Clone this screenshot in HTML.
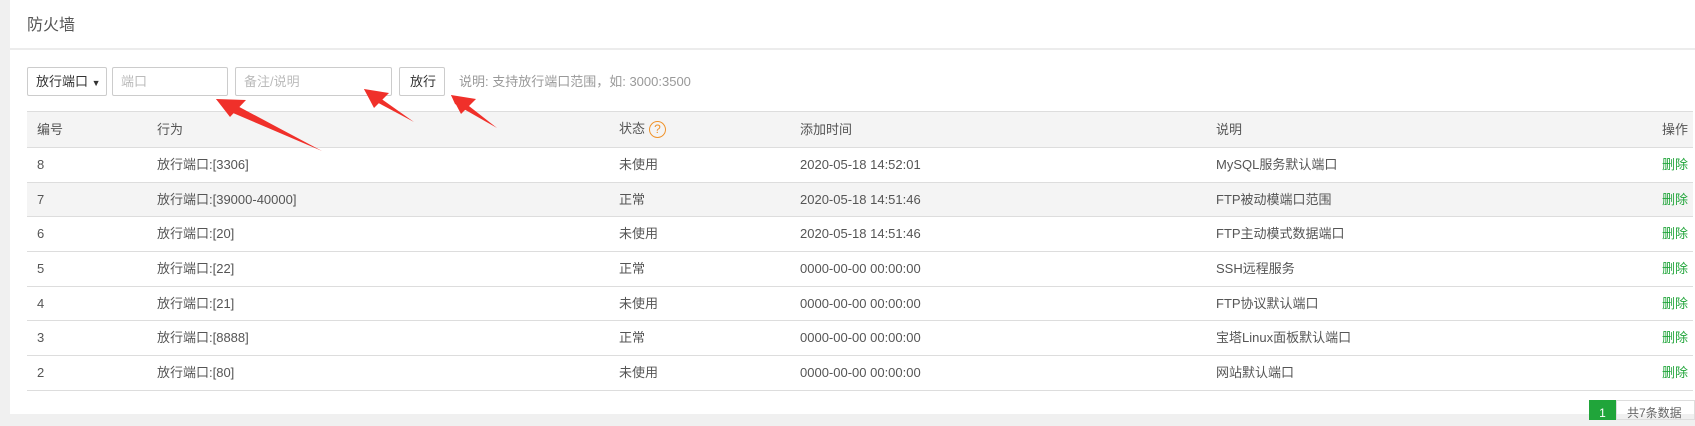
<!DOCTYPE html>
<html><head><meta charset="utf-8"><style>
*{box-sizing:border-box;margin:0;padding:0}
body{width:1695px;height:414px;overflow:hidden;background:#f0f0f0;font-family:"Liberation Sans","Noto Sans CJK SC",sans-serif;font-size:13px;color:#555;position:relative}
.main{position:absolute;left:10px;top:0;width:1685px;height:414px;background:#fff}
.title{position:absolute;left:17px;top:11px;font-size:16px;color:#555}
.hl{position:absolute;left:0;top:48px;width:1685px;height:2px;background:#ececec}
.ctl{position:absolute;top:67px;height:29px;border:1px solid #ccc;border-radius:2px;background:#fff;line-height:27px;padding-left:8px;color:#bbb}
.help{position:absolute;left:449px;top:67px;line-height:29px;color:#999}
table{position:absolute;left:17px;top:111px;width:1666px;border-collapse:collapse}
td{height:34.7px;border-top:1px solid #ddd;border-bottom:1px solid #ddd;padding:0;color:#555;white-space:nowrap;line-height:16px;vertical-align:middle}
tr.h td{height:36px;background:#f4f4f4}
tr.g td{background:#f4f4f4}
.c1{padding-left:10px;width:130px}
.c2{width:462px}.c3{width:181px}.c4{width:416px}
.r{text-align:right;padding-right:5px}
.del{color:#20a53a}
.q{display:inline-block;width:17px;height:17px;border:1.5px solid #f0932b;border-radius:50%;color:#f0932b;font-size:12px;line-height:14px;text-align:center;vertical-align:middle;margin-left:4px}
.pg1{position:absolute;left:1579px;top:400px;width:27px;height:20px;background:#20a53a;color:#fff;text-align:center;line-height:26px;font-size:12px}
.pg2{position:absolute;left:1606px;top:400px;width:79px;height:20px;border:1px solid #ddd;color:#666;padding-left:10px;line-height:24px;font-size:12px}
</style></head><body>
<div class="main">
<div class="title">防火墙</div>
<div class="hl"></div>
<div class="ctl" style="left:17px;width:80px;color:#333">放行端口 <span style="font-size:9px">▼</span></div>
<div class="ctl" style="left:102px;width:116px">端口</div>
<div class="ctl" style="left:225px;width:157px">备注/说明</div>
<div class="ctl" style="left:389px;width:46px;color:#333;padding-left:10px">放行</div>
<div class="help">说明: 支持放行端口范围，如: 3000:3500</div>
<table>
<tr class="h"><td class="c1">编号</td><td class="c2">行为</td><td class="c3">状态<span class="q">?</span></td><td class="c4">添加时间</td><td>说明</td><td class="r">操作</td></tr>
<tr><td class="c1">8</td><td>放行端口:[3306]</td><td>未使用</td><td>2020-05-18 14:52:01</td><td>MySQL服务默认端口</td><td class="r del">删除</td></tr>
<tr class="g"><td class="c1">7</td><td>放行端口:[39000-40000]</td><td>正常</td><td>2020-05-18 14:51:46</td><td>FTP被动模端口范围</td><td class="r del">删除</td></tr>
<tr><td class="c1">6</td><td>放行端口:[20]</td><td>未使用</td><td>2020-05-18 14:51:46</td><td>FTP主动模式数据端口</td><td class="r del">删除</td></tr>
<tr><td class="c1">5</td><td>放行端口:[22]</td><td>正常</td><td>0000-00-00 00:00:00</td><td>SSH远程服务</td><td class="r del">删除</td></tr>
<tr><td class="c1">4</td><td>放行端口:[21]</td><td>未使用</td><td>0000-00-00 00:00:00</td><td>FTP协议默认端口</td><td class="r del">删除</td></tr>
<tr><td class="c1">3</td><td>放行端口:[8888]</td><td>正常</td><td>0000-00-00 00:00:00</td><td>宝塔Linux面板默认端口</td><td class="r del">删除</td></tr>
<tr><td class="c1">2</td><td>放行端口:[80]</td><td>未使用</td><td>0000-00-00 00:00:00</td><td>网站默认端口</td><td class="r del">删除</td></tr>
</table>
<div class="pg1">1</div><div class="pg2">共7条数据</div>
</div>
<svg width="1695" height="414" style="position:absolute;left:0;top:0">
<g fill="#f0302a">
<polygon points="322,151 230,102 216,99 226,110"/><polygon points="216,99 246,100 230,117"/>
<polygon points="414,122 373,93 364,89 369,98"/><polygon points="364,89 389,93 374,108"/>
<polygon points="497,128 460,99 451,95 455,104"/><polygon points="451,95 476,99 461,114"/>
</g></svg>
</body></html>
